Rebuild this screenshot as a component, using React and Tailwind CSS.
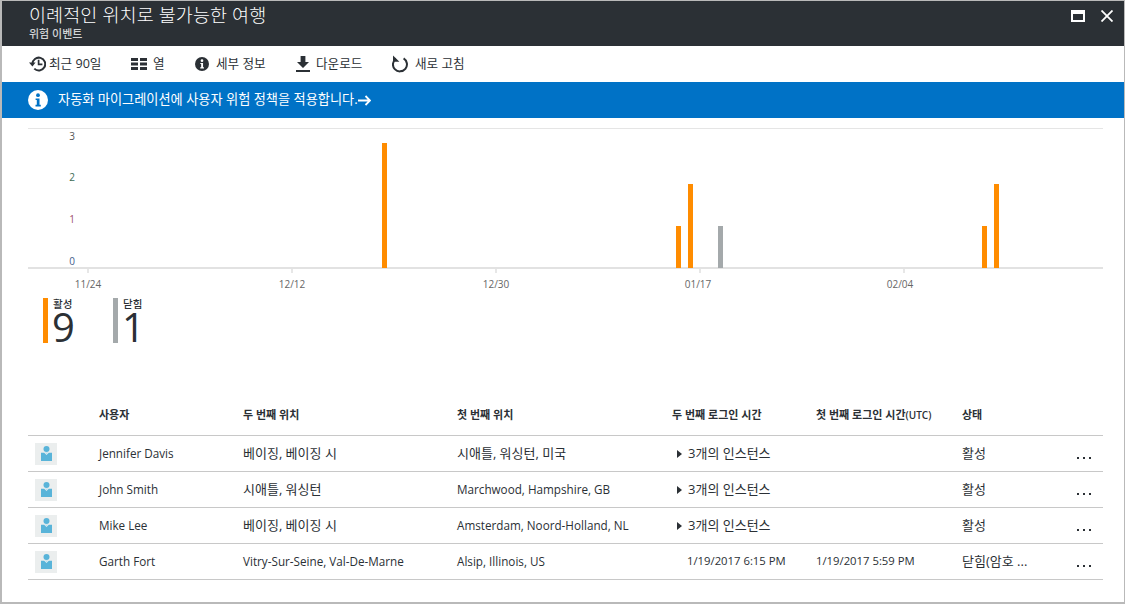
import React from "react";

function HistoryIcon() {
  return (
    <svg width="17" height="16" viewBox="0 0 17 16" fill="none" stroke="#2b3035" strokeWidth="2">
      <path d="M3.4 8a6.4 6.4 0 1 1 1.9 4.6" />
      <path d="M0 6.4h6.6L3.4 10.4z" fill="#2b3035" stroke="none" />
      <path d="M9.6 3.8v4.6H13.4" strokeWidth="1.7" />
    </svg>
  );
}
function ColumnsIcon() {
  return (
    <svg width="16" height="12" viewBox="0 0 16 12" fill="#2b3035">
      <rect x="0" y="0" width="7" height="3" /><rect x="9" y="0" width="7" height="3" />
      <rect x="0" y="4.5" width="7" height="3" /><rect x="9" y="4.5" width="7" height="3" />
      <rect x="0" y="9" width="7" height="3" /><rect x="9" y="9" width="7" height="3" />
    </svg>
  );
}
function InfoIcon({ size = 14, bg = "#2b3035", fg = "#fff" }) {
  return (
    <svg width={size} height={size} viewBox="0 0 20 20">
      <circle cx="10" cy="10" r="10" fill={bg} />
      <circle cx="10" cy="5.2" r="1.9" fill={fg} />
      <path d="M7.6 8.4h3.9v6.4h1.3v1.6H7.5v-1.6h1.3V10H7.6z" fill={fg} />
    </svg>
  );
}
function DownloadIcon() {
  return (
    <svg width="14" height="16" viewBox="0 0 14 16" fill="#2b3035">
      <path d="M4.6 0h4.8v6H13L7 12 1 6h3.6z" />
      <rect x="0" y="14" width="14" height="2" />
    </svg>
  );
}
function RefreshIcon() {
  return (
    <svg width="17" height="18" viewBox="0 0 17 18" fill="none" stroke="#2b3035" strokeWidth="2">
      <path d="M11.6 3.4A7 7 0 1 1 4 3.6" />
      <path d="M1 0.6h0L7.4 6.8H1z" fill="#2b3035" stroke="none" />
    </svg>
  );
}
function UserIcon() {
  return (
    <div className="w-[22px] h-[22px] bg-[#ebeeee] flex items-center justify-center">
      <svg width="11" height="15" viewBox="0 0 11 15">
        <circle cx="5.5" cy="3" r="3" fill="#59b4d9" />
        <path d="M0 6.8h3.2L5.5 9l2.3-2.2H11V15H0z" fill="#59b4d9" />
        <path d="M3.8 6.6h3.4L5.5 8.3z" fill="#b5dfef" />
      </svg>
    </div>
  );
}

const tools = [
  { icon: <HistoryIcon />, label: "최근 90일", w: "w-[102px] gap-[3px]" },
  { icon: <ColumnsIcon />, label: "열", w: "w-[64px] gap-[6px]" },
  { icon: <InfoIcon size={14} />, label: "세부 정보", w: "w-[101px] gap-[7px]" },
  { icon: <DownloadIcon />, label: "다운로드", w: "w-[96px] gap-[6px]" },
  { icon: <RefreshIcon />, label: "새로 고침", w: "w-auto gap-[6px]" },
];

const bars = [
  { x: 382, y: 143, c: "#ff8c00" },
  { x: 676, y: 226, c: "#ff8c00" },
  { x: 688, y: 184, c: "#ff8c00" },
  { x: 718, y: 226, c: "#a4a9ab" },
  { x: 982, y: 226, c: "#ff8c00" },
  { x: 994, y: 184, c: "#ff8c00" },
];
const ticks = [
  { x: 88, tx: 88, l: "11/24" },
  { x: 292, tx: 292, l: "12/12" },
  { x: 496, tx: 496, l: "12/30" },
  { x: 700, tx: 698, l: "01/17" },
  { x: 904, tx: 900, l: "02/04" },
];
const yl = [
  { l: "3", y: 140, c: "#555" },
  { l: "2", y: 181, c: "#3d6b55" },
  { l: "1", y: 223, c: "#a0506a" },
  { l: "0", y: 265, c: "#44608a" },
];

const rows = [
  ["Jennifer Davis", "베이징, 베이징 시", "시애틀, 워싱턴, 미국", null, null, "활성"],
  ["John Smith", "시애틀, 워싱턴", "Marchwood, Hampshire, GB", null, null, "활성"],
  ["Mike Lee", "베이징, 베이징 시", "Amsterdam, Noord-Holland, NL", null, null, "활성"],
  ["Garth Fort", "Vitry-Sur-Seine, Val-De-Marne", "Alsip, Illinois, US", "1/19/2017 6:15 PM", "1/19/2017 5:59 PM", "닫힘(암호 ..."],
];
const cols = "grid grid-cols-[71px_144px_214px_215px_144px_146px_98px_1fr]";

function Cell({ children }) {
  const ko = /[가-힣]/.test(children || "");
  return <div className={ko ? "text-[13px]" : "text-[11.7px]"}>{children}</div>;
}

function Stat({ color, label, value, w }) {
  return (
    <div className={`flex ${w}`}>
      <div className={`w-[5px] h-[45px] ${color}`} />
      <div className="ml-[5px] flex flex-col">
        <span className="text-[10.5px] leading-[12px] font-medium text-[#2b3035]">{label}</span>
        <span className="text-[40px] leading-[33px] font-medium -ml-[1px] text-[#2b3035]">{value}</span>
      </div>
    </div>
  );
}

export default function App() {
  return (
    <div
      className="w-[1125px] h-[604px] bg-white overflow-hidden border-t border-l-2 border-r border-b-2 border-[#b9b9b9] flex flex-col"
      style={{ fontFamily: '"Open Sans","Noto Sans CJK KR",sans-serif' }}
    >
      <header className="h-[45px] shrink-0 bg-[#2b3035] flex justify-between pl-[27px] pr-[11px] text-white">
        <div className="flex flex-col">
          <div className="text-[18.5px] leading-[26px] mt-[1px] tracking-[0.1px]" style={{ fontWeight: 300 }}>이례적인 위치로 불가능한 여행</div>
          <div className="text-[11px] leading-[12px] text-[#d3d5d6] font-medium">위험 이벤트</div>
        </div>
        <div className="flex items-start gap-[16px] pt-[9px]">
          <div className="w-[14px] h-[12px] border-2 border-white border-t-[4px]" />
          <svg width="12" height="12" viewBox="0 0 12 12" stroke="#fff" strokeWidth="1.8">
            <path d="M0.5 0.5l11 11M11.5 0.5l-11 11" />
          </svg>
        </div>
      </header>

      <div className="h-[36px] shrink-0 flex items-center pl-[27px] text-[12.6px] text-[#2b3035]">
        {tools.map((t) => (
          <div key={t.label} className={`flex items-center ${t.w}`}>
            {t.icon}
            <span>{t.label}</span>
          </div>
        ))}
      </div>

      <div className="h-[36px] shrink-0 bg-[#0072c6] flex items-center pl-[26px] text-white text-[13.2px]">
        <InfoIcon size={20} bg="#fff" fg="#0072c6" />
        <span className="ml-[10px]">자동화 마이그레이션에 사용자 위험 정책을 적용합니다.</span>
        <svg width="13" height="11" viewBox="0 0 13 11" fill="none" stroke="#fff" strokeWidth="1.8" className="mt-[1px]">
          <path d="M0 5.5h11.5M7.5 1l4.5 4.5L7.5 10" />
        </svg>
      </div>

      <svg width="1122" height="178" viewBox="0 118 1122 178" className="shrink-0 block">
        <g transform="translate(-2 0)">
          <rect x="28" y="128" width="1075" height="1" fill="#e5e5e5" />
          <rect x="28" y="267" width="1075" height="2" fill="#e2e2e2" />
          {bars.map((b) => (
            <rect key={b.x} x={b.x} y={b.y} width="5" height={268 - b.y} fill={b.c} />
          ))}
          {ticks.map((t) => (
            <g key={t.l}>
              <rect x={t.x - 0.5} y="269" width="1" height="4" fill="#d0d0d0" />
              <text x={t.tx} y="288" textAnchor="middle" fontSize="10" fill="#666">{t.l}</text>
            </g>
          ))}
          {yl.map((t) => (
            <text key={t.l} x="72" y={t.y} textAnchor="middle" fontSize="10" fill={t.c}>{t.l}</text>
          ))}
        </g>
      </svg>

      <div className="flex pl-[41px] mt-[2px] shrink-0">
        <Stat color="bg-[#ff8c00]" label="활성" value="9" w="w-[70px]" />
        <Stat color="bg-[#a4a9ab]" label="닫힘" value="1" w="w-[70px]" />
      </div>

      <div className="ml-[26px] w-[1075px] mt-[46px]">
        <div className={`${cols} h-[47px] items-center border-b border-[#c8c8c8] text-[11px] font-semibold text-[#2b3035] pt-[6px]`}>
          <div />
          <div>사용자</div>
          <div>두 번째 위치</div>
          <div>첫 번째 위치</div>
          <div>두 번째 로그인 시간</div>
          <div>첫 번째 로그인 시간<span className="text-[10px]">(UTC)</span></div>
          <div>상태</div>
          <div />
        </div>
        {rows.map((r) => (
          <div key={r[0]} className={`${cols} h-[36px] items-center border-b border-[#c8c8c8] text-[#2b3035] whitespace-nowrap`}>
            <div className="pl-[7px]"><UserIcon /></div>
            <Cell>{r[0]}</Cell>
            <Cell>{r[1]}</Cell>
            <Cell>{r[2]}</Cell>
            {r[3] ? (
              <div className="pl-[15px] text-[11.3px]">{r[3]}</div>
            ) : (
              <div className="flex items-center pl-[5px] text-[13px]">
                <span className="w-0 h-0 border-y-[4px] border-y-transparent border-l-[5px] border-l-[#2b3035] mr-[6px]" />
                3개의 인스턴스
              </div>
            )}
            <div className="text-[11.3px]">{r[4]}</div>
            <Cell>{r[5]}</Cell>
            <div className="flex items-center gap-[4px] pl-[17px] pt-[9px]">
              <i className="w-[2px] h-[2px] bg-[#2b3035]" />
              <i className="w-[2px] h-[2px] bg-[#2b3035]" />
              <i className="w-[2px] h-[2px] bg-[#2b3035]" />
            </div>
          </div>
        ))}
      </div>
    </div>
  );
}
